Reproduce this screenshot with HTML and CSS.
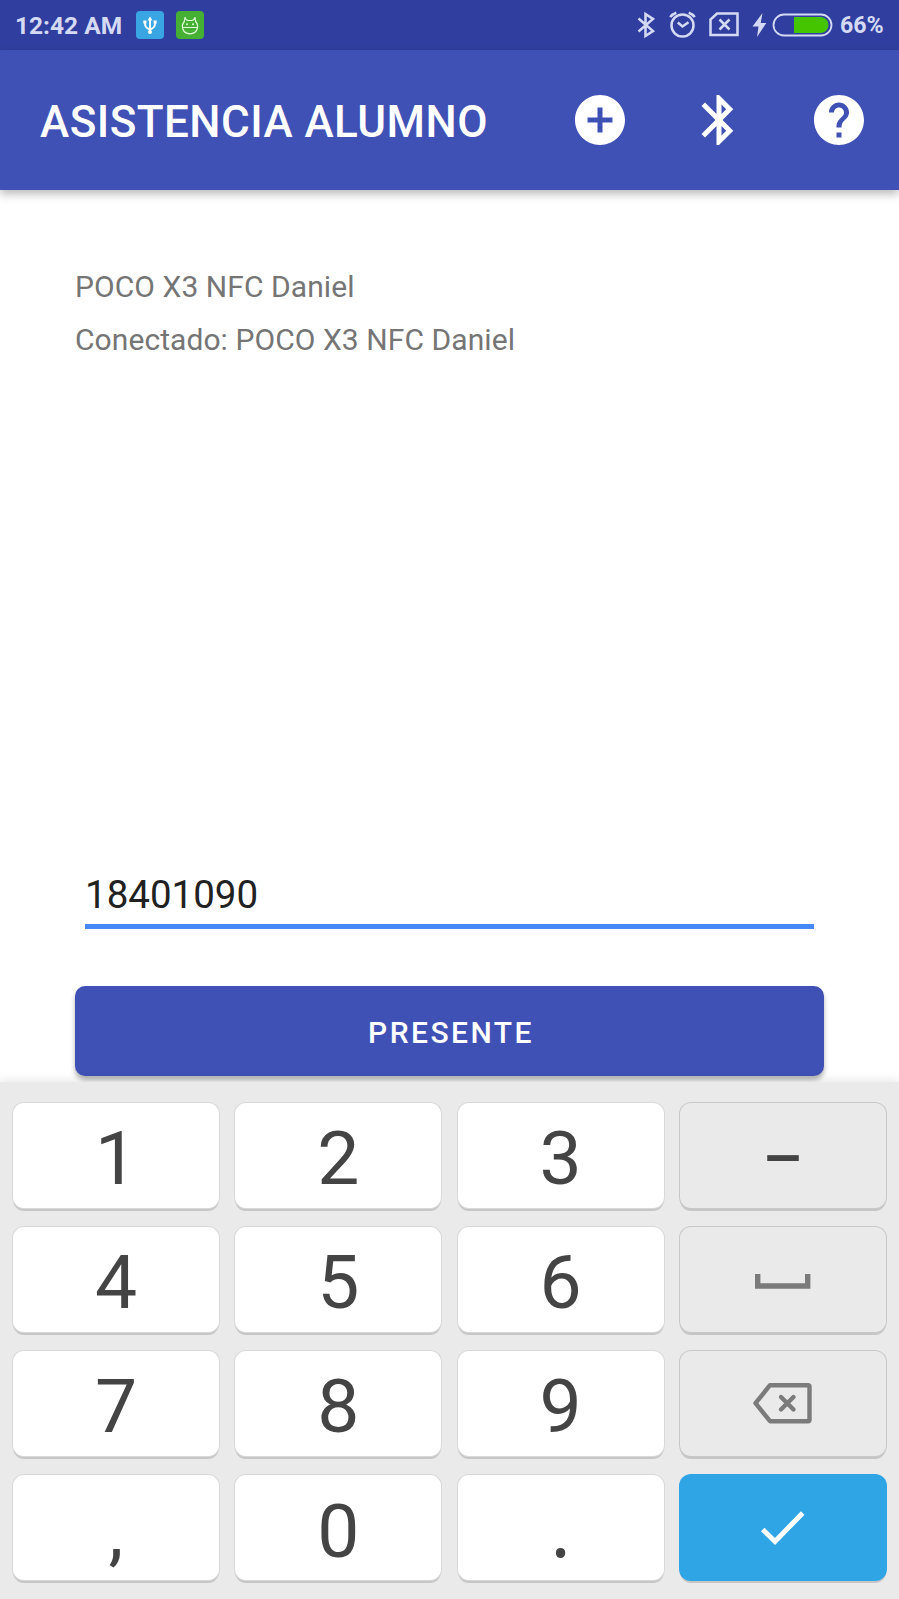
FILE: index.html
```html
<!DOCTYPE html>
<html lang="es">
<head>
<meta charset="utf-8">
<title>Asistencia Alumno</title>
<link rel="stylesheet" href="styles.css">
</head>
<body>
<div class="screen">
  <div class="status">
    <span class="clock">12:42 AM</span>
    <svg class="badge usb" width="28" height="28" viewBox="0 0 28 28"><rect width="28" height="28" rx="4" fill="#39a5e3"/><g fill="none" stroke="#fff" stroke-width="1.900"><path d="M14 8v13M9 10.500v2q0 4.500 5 6 5-1.500 5-6v-2"/></g><path d="M11.500 9.500l2.500-4 2.500 4zM7.300 9.500h3.200v3H7.300zM17.500 9.500h3.200v3h-3.200z" fill="#fff"/><circle cx="14" cy="21" r="2" fill="#fff"/></svg>
    <svg class="badge droid" width="28" height="28" viewBox="0 0 28 28"><rect width="28" height="28" rx="4" fill="#46b035"/><g fill="none" stroke="#e3ffd9" stroke-width="1.200" stroke-linejoin="round"><path d="M10.300 8.800L9 6.500 8.300 10.500C4.500 15 6.500 22.800 14 22.800s9.500-7.800 5.700-12.300L19 6.500l-1.300 2.300-1.700.7h-4zM6.600 16.500h14.800"/></g><circle cx="11" cy="13.300" r="1" fill="#e3ffd9"/><circle cx="17" cy="13.300" r="1" fill="#e3ffd9"/></svg>
    <div class="spacer"></div>
    <svg class="sys" width="203" height="50" viewBox="637 0 203 50"><g fill="none" stroke="#d5daf4" stroke-width="2.500">
      <path d="M638.500 18.500l14.500 12.500-7.500 5V14l7.500 5-14.500 12.500"/>
      <circle cx="682.500" cy="25.500" r="11"/><path d="M677.800 22.500l4.700 4 6-4.200M670.300 17.200q1.700-3 6-4.500M688.700 12.700q4.300 1.500 6 4.500"/>
      <path d="M717 13.500h20.500v21.500h-27V19.500zM719.500 19.500l10 10M729.500 19.500l-10 10"/>
      <rect x="773.500" y="14.500" width="58" height="21" rx="10.500" stroke-width="1.800"/></g>
      <path d="M762.500 13l-10 13.500h6L757 37l9.300-14h-5.600z" fill="#d5daf4"/>
      <path d="M794 17h26.500a8 8 0 0 1 0 16H794z" fill="#45c400"/></svg>
    <span class="pct">66%</span>
  </div>
  <header class="bar">
    <h1>ASISTENCIA ALUMNO</h1>
    <svg class="act add" width="60" height="60" viewBox="0 0 24 24"><path d="M12 2C6.480 2 2 6.480 2 12s4.480 10 10 10 10-4.480 10-10S17.520 2 12 2zm5 11h-4v4h-2v-4H7v-2h4V7h2v4h4v2z"/></svg>
    <svg class="act bt" width="60" height="60" viewBox="0 0 24 24"><path d="M17.710 7.710L12 2h-1v7.590L6.410 5 5 6.410 10.590 12 5 17.590 6.410 19 11 14.410V22h1l5.710-5.710-4.300-4.290 4.300-4.290zM13 5.830l1.880 1.880L13 9.590V5.830zm1.880 10.460L13 18.170v-3.760l1.880 1.880z"/></svg>
    <svg class="act help" width="60" height="60" viewBox="0 0 24 24"><path d="M12 2C6.480 2 2 6.480 2 12s4.480 10 10 10 10-4.480 10-10S17.520 2 12 2zm1 17h-2v-2h2v2zm2.070-7.750l-.9.920C13.450 12.900 13 13.500 13 15h-2v-.5c0-1.100.450-2.100 1.170-2.830l1.240-1.260c.370-.360.590-.860.590-1.410 0-1.100-.9-2-2-2s-2 .9-2 2H8c0-2.210 1.790-4 4-4s4 1.790 4 4c0 .880-.360 1.680-.930 2.250z"/></svg>
  </header>
  <main class="content">
    <p class="info">POCO X3 NFC Daniel</p>
    <p class="info">Conectado: POCO X3 NFC Daniel</p>
    <div class="field">18401090</div>
    <button class="send">PRESENTE</button>
  </main>
  <div class="keypad">
    <div class="key">1</div><div class="key">2</div><div class="key">3</div><div class="key fn dash">–</div>
    <div class="key">4</div><div class="key">5</div><div class="key">6</div>
    <div class="key fn"><svg width="60" height="44" viewBox="0 0 60 44"><path d="M4.700 15v12h50V15" fill="none" stroke="#7b7b7b" stroke-width="5.400"/></svg></div>
    <div class="key">7</div><div class="key">8</div><div class="key">9</div>
    <div class="key fn"><svg width="60" height="44" viewBox="0 0 60 44"><g fill="none" stroke="#7b7b7b" stroke-width="4.400" stroke-linejoin="round"><path d="M17 2.200h38q1.500 0 1.500 1.500v33q0 1.500-1.500 1.500H17L2.500 20.200z"/><path d="M28 14l12.500 12.500M40.500 14L28 26.500" stroke-linecap="round"/></g></svg></div>
    <div class="key low">,</div><div class="key low">0</div><div class="key dot">.</div>
    <div class="key ok"><svg width="60" height="44" viewBox="0 0 60 44"><path d="M9.700 22.500L22 34.500 49.700 6" fill="none" stroke="#fff" stroke-width="5"/></svg></div>
  </div>
</div>
</body>
</html>
```
FILE: styles.css
```css
* { box-sizing: border-box; }
body { margin: 0; background: #fff; font-family: Roboto, "Liberation Sans", sans-serif; }
.screen { width: 899px; height: 1599px; display: flex; flex-direction: column; overflow: hidden; }
.status { height: 50px; flex: none; display: flex; align-items: center; background: #303f9f; color: #d5daf4; padding: 0 15px; font-size: 24.500px; font-weight: 700; }
.clock { width: 121px; white-space: nowrap; }
.badge { flex: none; margin-right: 12px; }
.spacer { flex: 1; }
.sys { flex: none; }
.pct { width: 44px; font-size: 23.200px; white-space: nowrap; }
.bar { height: 140px; flex: none; display: flex; align-items: center; background: #3f51b5; padding-left: 40px; box-shadow: 0 4px 9px rgba(0,0,0,.28); }
.bar h1 { margin: 4px 0 0; width: 529.500px; font-size: 44px; font-weight: 500; line-height: 52px; letter-spacing: .450px; color: #fff; white-space: nowrap; }
.act { flex: none; fill: #fff; }
.bt { margin-left: 59.500px; }
.help { margin-left: 60px; }
.content { height: 892px; flex: none; padding: 77px 75px 0; display: flex; flex-direction: column; }
.info { margin: 0 0 13px; font-size: 30px; line-height: 40px; letter-spacing: .070px; color: #757575; white-space: nowrap; }
.field { margin: 495px 10px 0; height: 61px; padding-top: 2px; border-bottom: 5px solid #4788f7; font-size: 38.500px; line-height: 50px; color: #212121; }
.send { margin: 57px 0 0; height: 90px; flex: none; border: 0; border-radius: 10px; background: #3f51b5; color: #fff; font: 500 30px/40px Roboto, sans-serif; letter-spacing: 2.450px; padding: 3px 0 0 3px; box-shadow: 0 4px 5px rgba(0,0,0,.3); }
.keypad { flex: 1; background: #eaeaea; padding: 21px 13px 0; display: grid; grid-template-columns: repeat(4, 206px); grid-auto-rows: 105px; column-gap: 16.300px; row-gap: 19px; box-shadow: 0 -3px 8px rgba(0,0,0,.08); }
.key { background: #fff; border-radius: 11px; box-shadow: 0 0 0 1px #d8d8d8, 0 3px 0 #c6c6c6; display: flex; align-items: center; justify-content: center; font-size: 75px; line-height: 88px; color: #444; padding-top: 5px; }
.low { padding-top: 7px; }
.fn, .ok { padding-top: 3px; }
.fn { background: #eaeaea; box-shadow: 0 0 0 1px #c8c8c8, 0 3px 0 #c6c6c6; }
.dot, .dash { font-family: "Noto Sans", sans-serif; }
.dot { padding-top: 0; }
.dash { padding: 0 0 14px; }
.ok { background: #2fa5e6; box-shadow: 0 0 0 1px #2fa5e6, 0 3px 0 #c6c6c6; }
```
